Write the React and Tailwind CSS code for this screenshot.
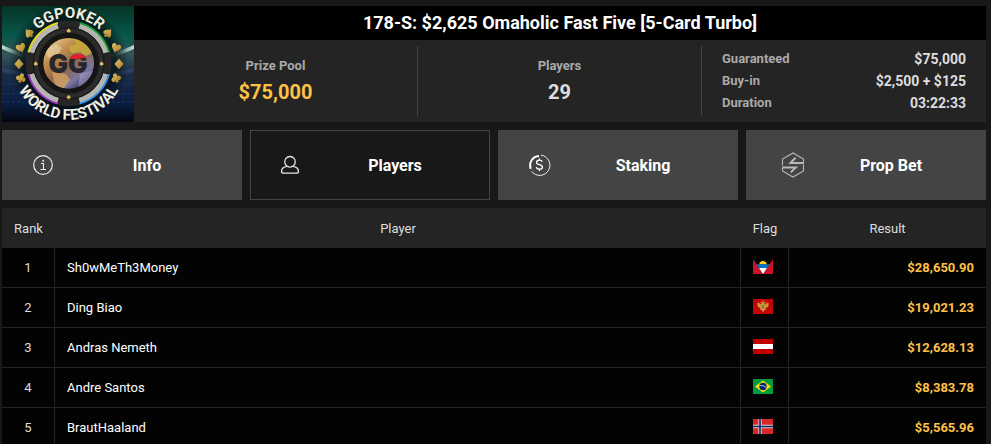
import React, { useState } from "react";
import clsx from "clsx";

const SUITS = {
  spade: "M0 -4.5C1 -2.4 4 -1 4 1.2C4 3 1.8 3.5 0.6 2.2L1.5 4.3H-1.5L-0.6 2.2C-1.8 3.5 -4 3 -4 1.2C-4 -1 -1 -2.4 0 -4.5Z",
  heart: "M0 4.3C-1 2.4 -4.3 1 -4.3 -1.6C-4.3 -4.2 -1 -4.6 0 -2.2C1 -4.6 4.3 -4.2 4.3 -1.6C4.3 1 1 2.4 0 4.3Z",
  diamond: "M0 -4.8L4.2 0L0 4.8L-4.2 0Z",
  club: "M0 -4.4A2 2 0 0 1 1.5 -1.2A2.1 2.1 0 1 1 0.7 1.9L1.5 4.2H-1.5L-0.7 1.9A2.1 2.1 0 1 1 -1.5 -1.2A2 2 0 0 1 0 -4.4Z",
};

const sideSuits = [
  { suit: "spade", x: 27, y: 27, rotate: -42 },
  { suit: "heart", x: 19, y: 42, rotate: -20 },
  { suit: "diamond", x: 17, y: 58, rotate: 0 },
  { suit: "club", x: 19, y: 72, rotate: 20 },
  { suit: "spade", x: 106, y: 27, rotate: 42 },
  { suit: "heart", x: 114, y: 42, rotate: 20 },
  { suit: "diamond", x: 117, y: 58, rotate: 0 },
  { suit: "club", x: 114, y: 72, rotate: -20 },
];

const FestivalLogo = () => (
  <svg
    viewBox="0 0 132 116"
    className="block w-[132px] h-[116px] shrink-0 overflow-visible"
    role="img"
    aria-label="GGPoker World Festival"
  >
    <defs>
      <linearGradient id="sky" x1="0" y1="0" x2="0" y2="1">
        <stop offset="0" stopColor="#053427" />
        <stop offset="0.25" stopColor="#08564a" />
        <stop offset="0.42" stopColor="#345558" />
        <stop offset="0.58" stopColor="#1b2d48" />
        <stop offset="0.85" stopColor="#0a1c3f" />
        <stop offset="1" stopColor="#03060f" />
      </linearGradient>
      <radialGradient id="shade" cx="0.5" cy="0.5" r="0.5">
        <stop offset="0" stopColor="#020d10" stopOpacity="0.95" />
        <stop offset="0.78" stopColor="#020d10" stopOpacity="0.7" />
        <stop offset="1" stopColor="#020d10" stopOpacity="0" />
      </radialGradient>
      <linearGradient id="beam" x1="0" y1="0" x2="1" y2="0">
        <stop offset="0" stopColor="#e6f5e9" stopOpacity="0.85" />
        <stop offset="0.16" stopColor="#9fc4b8" stopOpacity="0.2" />
        <stop offset="0.84" stopColor="#9fc4b8" stopOpacity="0.2" />
        <stop offset="1" stopColor="#e6f5e9" stopOpacity="0.85" />
      </linearGradient>
      <linearGradient id="globe" x1="0.15" y1="0.1" x2="0.8" y2="0.95">
        <stop offset="0" stopColor="#e2bf84" />
        <stop offset="0.3" stopColor="#b98546" />
        <stop offset="0.55" stopColor="#8d6650" />
        <stop offset="0.8" stopColor="#7c769f" />
        <stop offset="1" stopColor="#2b2c55" />
      </linearGradient>
      <linearGradient id="gold" x1="0" y1="0" x2="1" y2="1">
        <stop offset="0" stopColor="#e6c262" />
        <stop offset="1" stopColor="#a3772a" />
      </linearGradient>
      <clipPath id="globeClip">
        <circle cx="66.7" cy="57.3" r="26" />
      </clipPath>
      <clipPath id="redClip">
        <path d="M67 44H90V52H80L78 53H67Z" />
      </clipPath>
      <path id="topArc" d="M21.2 57.3A45.5 45.5 0 0 1 112.2 57.3" />
      <path id="bottomArc" d="M10.2 57.3A56.5 56.5 0 0 0 123.2 57.3" />
    </defs>

    <rect width="132" height="116" fill="url(#sky)" />
    <path d="M0 39C14 45 26 49 40 51H92C106 49 118 45 132 39V43C118 49 106 54 92 55H40C26 54 14 49 0 43Z" fill="url(#beam)" />
    <path d="M0 62L40 70H92L132 62V66L92 74H40L0 66Z" fill="#4b5f94" opacity="0.35" />
    <path d="M0 78H132M0 88H132M0 96H132" stroke="#2c4b8c" strokeWidth="2" opacity="0.25" strokeDasharray="3 2" />
    <circle cx="66.7" cy="57.3" r="60" fill="url(#shade)" />

    {/* chip */}
    <circle cx="66.7" cy="57.3" r="42" fill="#1b1b1b" />
    <circle
      cx="66.7"
      cy="57.3"
      r="37.5"
      fill="none"
      stroke="#b5b5b0"
      strokeWidth="8"
      pathLength="360"
      strokeDasharray="58 32"
      strokeDashoffset="-16"
    />
    <g fill="none" strokeWidth="1.8">
      <path d="M26.3 46.5A41.8 41.8 0 0 1 55.9 16.9" stroke="#e6dc1c" />
      <path d="M77.5 16.9A41.8 41.8 0 0 1 107.1 46.5" stroke="#1e9e3a" />
      <path d="M26.3 68.1A41.8 41.8 0 0 0 55.9 97.7" stroke="#9a2fc0" />
      <path d="M77.5 97.7A41.8 41.8 0 0 0 107.1 68.1" stroke="#2f8ff0" />
    </g>
    <g fill="#262626">
      <path d="M56 15.8A42.8 42.8 0 0 1 77.4 15.8L75.5 25H58Z" />
      <path d="M56 98.8A42.8 42.8 0 0 0 77.4 98.8L75.5 90H58Z" />
      <path d="M25.2 46.6A42.8 42.8 0 0 0 25.2 68L34.5 66V48.6Z" />
      <path d="M108.2 46.6A42.8 42.8 0 0 1 108.2 68L99 66V48.6Z" />
    </g>
    <circle cx="66.7" cy="57.3" r="36" fill="#2c2c2c" />
    <circle cx="66.7" cy="57.3" r="35.5" fill="none" stroke="#121212" strokeWidth="1" />
    <circle cx="66.7" cy="57.3" r="28.5" fill="none" stroke="#151515" strokeWidth="4" />
    {[
      [66.7, 24.6],
      [99.6, 57.6],
      [66.7, 91],
      [33.8, 57.6],
    ].map(([x, y]) => (
      <path key={`${x}-${y}`} d={SUITS.spade} transform={`translate(${x} ${y}) scale(0.5)`} fill="#e9bd6a" />
    ))}

    {/* globe */}
    <circle cx="66.7" cy="57.3" r="26" fill="url(#globe)" />
    <g clipPath="url(#globeClip)">
      <path d="M72 32L84 36L92 46L84 50L78 46L70 47L66 41L74 38Z" fill="#c9ae3c" opacity="0.8" />
      <path d="M44 44L54 38L60 42L56 48L46 52Z" fill="#f1dfb6" opacity="0.5" />
      <path d="M50 66L64 68L68 74L62 82L58 84L52 76Z" fill="#d9a45c" opacity="0.75" />
      <path d="M78 68L92 64L88 78L76 82Z" fill="#a9a4cc" opacity="0.5" />
    </g>
    <circle cx="66.7" cy="57.3" r="26" fill="none" stroke="#0d0d0d" strokeWidth="1.2" />

    <g className="font-['Inter',sans-serif] font-black text-[26px]">
      <text x="66" y="67" textAnchor="middle" fill="#25252a">GG</text>
      <text x="66" y="67" textAnchor="middle" fill="#e0202c" clipPath="url(#redClip)" aria-hidden="true">GG</text>
    </g>

    {sideSuits.map(({ suit, x, y, rotate }) => (
      <path
        key={`${x}-${y}`}
        d={SUITS[suit]}
        transform={`translate(${x} ${y}) rotate(${rotate}) scale(1.1)`}
        fill="url(#gold)"
      />
    ))}

    <g className="font-['Roboto',sans-serif] font-bold text-[15px]" fill="#f3efe0" textAnchor="middle">
      <text>
        <textPath href="#topArc" startOffset="50%">GGPOKER</textPath>
      </text>
      <text>
        <textPath href="#bottomArc" startOffset="50%">WORLD FESTIVAL</textPath>
      </text>
    </g>
  </svg>
);

const InfoIcon = () => (
  <svg viewBox="0 0 40 40" className="w-10 h-10 shrink-0" fill="none" stroke="#ececec" aria-hidden="true">
    <circle cx="20" cy="20" r="9.3" strokeWidth="1.2" />
    <path d="M18 18.5H20.5V24M17.5 24.5H23" strokeWidth="1.1" />
    <circle cx="20.2" cy="15.7" r="1" fill="#ececec" stroke="none" />
  </svg>
);

const PlayersIcon = () => (
  <svg viewBox="0 0 40 40" className="w-10 h-10 shrink-0" fill="none" stroke="#e4e4e4" strokeWidth="1.3" aria-hidden="true">
    <path d="M16.2 21.3A5.3 5.3 0 1 1 21.8 21.3C25.5 21.8 27.5 23.8 27.5 26.2C27.5 27.6 26.6 28.2 25.3 28.2H12.7C11.4 28.2 10.5 27.6 10.5 26.2C10.5 23.8 12.5 21.8 16.2 21.3Z" />
    <path d="M16.2 21.3C18 22.3 20 22.3 21.8 21.3" />
  </svg>
);

const StakingIcon = () => (
  <svg viewBox="0 0 40 40" className="w-10 h-10 shrink-0" fill="none" stroke="#ffffff" aria-hidden="true">
    <path d="M22 10.1A10.2 10.2 0 1 1 12.6 26.4" strokeWidth="0.9" />
    <path d="M11.8 23.8A9.4 9.4 0 0 1 20 11" strokeWidth="2" />
    <path d="M23.2 16.8C22.8 15.7 21.8 15.2 20.4 15.2C18.8 15.2 17.6 16 17.6 17.4C17.6 20.6 23.4 18.8 23.4 22C23.4 23.5 22 24.2 20.4 24.2C18.8 24.2 17.6 23.6 17.3 22.2M20.4 13.4V15.2M20.4 24.2V26" strokeWidth="1.3" />
  </svg>
);

const PropBetIcon = () => (
  <svg viewBox="0 0 40 40" className="w-10 h-10 shrink-0" fill="none" stroke="#b8b8b8" aria-hidden="true">
    <path d="M36.5 17.8V14L26 8L15.5 14V20.5M15.5 22.5V26L26 32L36.5 26V19.5" strokeWidth="1.1" />
    <path d="M36.8 18H23.5L28.5 12.8" strokeWidth="2" />
    <path d="M15.2 22.4H28.8L23.8 27.4" strokeWidth="2" />
  </svg>
);

const tabs = [
  { id: "info", label: "Info", Icon: InfoIcon },
  { id: "players", label: "Players", Icon: PlayersIcon },
  { id: "staking", label: "Staking", Icon: StakingIcon },
  { id: "propbet", label: "Prop Bet", Icon: PropBetIcon },
];

const flags = {
  AG: (
    <>
      <rect width="20" height="15" fill="#ce1126" />
      <path d="M0 0H20L10 15Z" fill="#000" />
      <path d="M5.6 5.4L6.7 4.4L6.6 3L8 2.9L8.8 1.6L10 2.4L11.2 1.6L12 2.9L13.4 3L13.3 4.4L14.4 5.4Z" fill="#fcd116" />
      <path d="M3.3 5.2H16.7L14 9H6Z" fill="#0072c6" />
      <path d="M6 9H14L10 15Z" fill="#fff" />
    </>
  ),
  ME: (
    <>
      <rect width="20" height="15" fill="#c40308" />
      <path d="M10 1L11 2.6H9ZM9.2 3L8 2.8L7.3 4L8.7 4.6L8 5.6L5 3.2L4.2 5L5 8L7.6 9L6.6 10.8L8.4 10.8L9 12L10 13L11 12L11.6 10.8L13.4 10.8L12.4 9L15 8L15.8 5L15 3.2L12 5.6L11.3 4.6L12.7 4L12 2.8L10.8 3L10 4Z" fill="#c79a35" />
      <rect x="9" y="6" width="2" height="3.4" fill="#8a6a5a" />
    </>
  ),
  AT: (
    <>
      <rect width="20" height="15" fill="#c00000" />
      <rect y="5" width="20" height="5" fill="#fff" />
    </>
  ),
  BR: (
    <>
      <rect width="20" height="15" fill="#009b3a" />
      <path d="M10 1.6L18 7.5L10 13.4L2 7.5Z" fill="#fedf00" />
      <circle cx="10" cy="7.5" r="3.7" fill="#002776" />
      <path d="M6.5 6.6C9 6.2 11.8 7 13.4 8.9" stroke="#dbe6f5" strokeWidth="0.8" fill="none" />
    </>
  ),
  NO: (
    <>
      <rect width="20" height="15" fill="#d72828" />
      <path d="M0 7.5H20M7 0V15" stroke="#e9c9cf" strokeWidth="3.4" />
      <path d="M0 7.5H20M7 0V15" stroke="#002868" strokeWidth="1.6" />
    </>
  ),
};

const Flag = ({ code }) => (
  <svg viewBox="0 0 20 15" className="block w-5 h-[15px]" role="img" aria-label={code}>
    {flags[code]}
  </svg>
);

const players = [
  { rank: 1, name: "Sh0wMeTh3Money", flag: "AG", result: "$28,650.90" },
  { rank: 2, name: "Ding Biao", flag: "ME", result: "$19,021.23" },
  { rank: 3, name: "Andras Nemeth", flag: "AT", result: "$12,628.13" },
  { rank: 4, name: "Andre Santos", flag: "BR", result: "$8,383.78" },
  { rank: 5, name: "BrautHaaland", flag: "NO", result: "$5,565.96" },
];

const details = [
  { label: "Guaranteed", value: "$75,000" },
  { label: "Buy-in", value: "$2,500 + $125" },
  { label: "Duration", value: "03:22:33" },
];

const Stat = ({ label, value, valueClass }) => (
  <div className="flex flex-col items-center justify-center gap-0.5 border-r border-[#444444]">
    <span className="text-[13px] leading-5 font-bold text-[#aaaaaa]">{label}</span>
    <span className={clsx("text-xl leading-7 font-bold", valueClass)}>{value}</span>
  </div>
);

const TournamentHeader = () => (
  <header className="flex bg-[#242424]">
    <FestivalLogo />
    <div className="flex-1 flex flex-col">
      <h1 className="h-[34px] bg-black text-center text-lg leading-[34px] font-bold text-white">
        178-S: $2,625 Omaholic Fast Five [5-Card Turbo]
      </h1>
      <div className="flex-1 grid grid-cols-3 py-1.5">
        <Stat label="Prize Pool" value="$75,000" valueClass="text-[#ffc144]" />
        <Stat label="Players" value="29" valueClass="text-[#dddddd]" />
        <dl className="flex flex-col justify-center px-5">
          {details.map((d) => (
            <div key={d.label} className="flex justify-between leading-[22px] font-bold">
              <dt className="text-[13px] text-[#aaaaaa]">{d.label}</dt>
              <dd className="text-sm leading-[22px] text-[#dddddd]">{d.value}</dd>
            </div>
          ))}
        </dl>
      </div>
    </div>
  </header>
);

const PlayersTable = () => (
  <table className="w-full table-fixed border-separate border-spacing-0 text-[13px]">
    <thead>
      <tr className="h-10 bg-[#242424] text-[#dddddd]">
        <th className="w-[53px] px-0 pt-0.5 pb-0 font-normal">Rank</th>
        <th className="px-0 pt-0.5 pb-0 font-normal">Player</th>
        <th className="w-12 px-0 pt-0.5 pb-0 font-normal">Flag</th>
        <th className="w-[197px] px-0 pt-0.5 pb-0 font-normal">Result</th>
      </tr>
    </thead>
    <tbody>
      {players.map((p) => (
        <tr key={p.rank} className="h-10 bg-[#030303]">
          <td className="p-0 text-center text-[#dddddd] border-r border-b border-[#242424]">{p.rank}</td>
          <td className="px-3 py-0 text-white border-r border-b border-[#242424]">{p.name}</td>
          <td className="px-3 pt-0 pb-0.5 border-r border-b border-[#242424]">
            <Flag code={p.flag} />
          </td>
          <td className="px-3 py-0 text-right font-bold text-[#ffc144] border-b border-[#242424]">{p.result}</td>
        </tr>
      ))}
    </tbody>
  </table>
);

export default function App() {
  const [activeTab, setActiveTab] = useState("players");

  return (
    <div className="min-h-screen bg-[#181818] pt-1.5 pl-0.5 pr-[5px] font-['Roboto',sans-serif]">
      <TournamentHeader />
      <nav className="grid grid-cols-4 gap-2 py-2">
        {tabs.map(({ id, label, Icon }) => (
          <button
            key={id}
            type="button"
            onClick={() => setActiveTab(id)}
            className={clsx(
              "flex items-center h-[70px] pl-5 pr-2.5 border border-[#444444] font-bold text-white cursor-pointer",
              activeTab === id ? "bg-[#181818]" : "bg-[#444444]"
            )}
          >
            <Icon />
            <span className="flex-1 pt-0.5 text-center">{label}</span>
          </button>
        ))}
      </nav>
      <PlayersTable />
    </div>
  );
}
